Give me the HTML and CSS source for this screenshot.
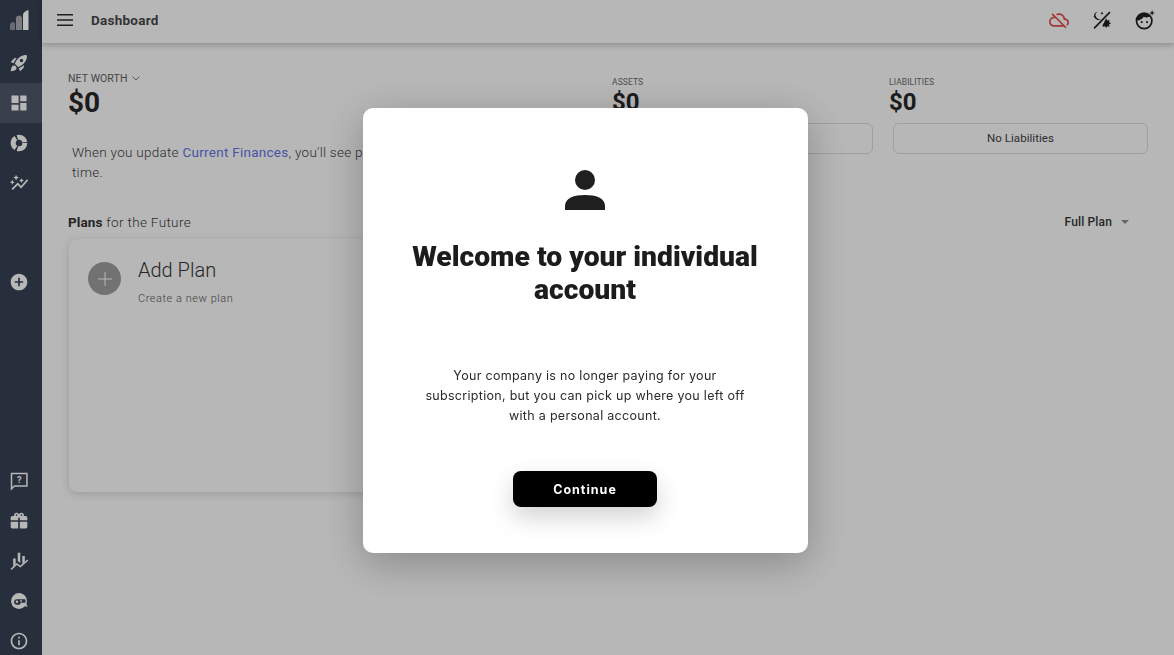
FILE: index.html
```html
<!DOCTYPE html>
<html lang="en">
<head>
<meta charset="utf-8">
<title>Dashboard</title>
<link rel="stylesheet" href="styles.css">
</head>
<body>
<div class="app">
  <nav class="sidebar">
    <div class="logo">
      <svg class="ico" viewBox="0 0 20 20" width="20" height="20"><path d="M1 14.500a3 3 0 0 1 5-1.500V20H1z" fill="#8d9199"/><path d="M7 9.500a3 3 0 0 1 6-1.500V20H7z" fill="#a3a6ad"/><path d="M14 5c0-2.500 2.500-4 5.500-5V20H14z" fill="#fff"/></svg>
    </div>
    <a class="nav-item"><svg class="ico" viewBox="0 0 24 24"><path d="M9.190 6.350c-2.040 2.290-3.440 5.580-3.570 5.890L2 10.690l4.050-4.050c.47-.47 1.150-.68 1.810-.55l1.330.26zM11.170 17s3.740-1.550 5.890-3.700c5.400-5.400 4.500-9.620 4.210-10.570-.95-.3-5.170-1.190-10.570 4.210C8.550 9.090 7 12.830 7 12.830L11.170 17zm6.480-2.190c-2.290 2.040-5.580 3.440-5.890 3.570L13.310 22l4.050-4.050c.47-.47.68-1.150.55-1.810l-.26-1.330zM9 18c0 .83-.34 1.580-.88 2.120C6.940 21.300 2 22 2 22s.7-4.940 1.880-6.120C4.420 15.340 5.170 15 6 15c1.660 0 3 1.340 3 3zm4-9c0-1.100.9-2 2-2s2 .9 2 2-.9 2-2 2-2-.9-2-2z"/></svg></a>
    <a class="nav-item active"><svg class="ico" viewBox="0 0 24 24"><path d="M3 3h8.500v9H3zM13.500 3H21v7h-7.500zM3 14h8.500v7H3zM13.500 12H21v9h-7.500z"/></svg></a>
    <a class="nav-item"><svg class="ico" viewBox="0 0 24 24"><circle class="donut" cx="12" cy="12" r="7" pathLength="24" stroke-dasharray="7 1 7.500 1 6.500 1"/></svg></a>
    <a class="nav-item"><svg class="ico" viewBox="0 0 24 24"><path d="M14.060 9.940 12 9l2.060-.94L15 6l.94 2.060L18 9l-2.060.94L15 12l-.94-2.060zM4 14l.94-2.060L7 11l-2.060-.94L4 8l-.94 2.060L1 11l2.060.94L4 14zm4.500-5 1.090-2.410L12 5.500 9.590 4.410 8.500 2 7.410 4.410 5 5.500l2.410 1.090L8.500 9zm-4 11.500 6-6.010 4 4L23 8.930l-1.410-1.410-7.090 7.970-4-4L3 19l1.500 1.500z"/></svg></a>
    <a class="nav-item add"><svg class="ico" viewBox="0 0 24 24"><path d="M12 2C6.480 2 2 6.480 2 12s4.480 10 10 10 10-4.480 10-10S17.520 2 12 2zm5 11h-4v4h-2v-4H7v-2h4V7h2v4h4v2z"/></svg></a>
    <a class="nav-item bottom-first"><svg class="ico" viewBox="0 0 24 24"><path class="line" d="M3 3h18.500v15H6.500L3 21.500z"/><text class="qmark" x="12.300" y="14.500" text-anchor="middle">?</text></svg></a>
    <a class="nav-item"><svg class="ico" viewBox="0 0 24 24"><path d="M20 6h-2.200c.1-.3.2-.6.2-1 0-1.700-1.300-3-3-3-1 0-2 .5-2.500 1.400L12 4l-.5-.6C11 2.500 10 2 9 2 7.300 2 6 3.300 6 5c0 .4.100.7.200 1H4c-1.100 0-2 .9-2 2v3h9V8h2v3h9V8c0-1.100-.9-2-2-2zM9 6c-.6 0-1-.4-1-1s.4-1 1-1 1 .4 1 1-.4 1-1 1zm6 0c-.6 0-1-.4-1-1s.4-1 1-1 1 .4 1 1-.4 1-1 1zM2 13v6c0 1.100.9 2 2 2h7v-8zm11 0v8h7c1.100 0 2-.9 2-2v-6z"/></svg></a>
    <a class="nav-item"><svg class="ico" viewBox="0 0 24 24"><path d="M5 9h3v6.500l-3 3zM10.500 2h3v12.500l-3-2.500zM16 6h3v6.500l-3 3z"/><path class="line" d="M2.500 22l7-6.500 4 3.200L22.500 11"/></svg></a>
    <a class="nav-item"><svg class="ico" viewBox="0 0 24 24"><path d="M12 2.500a9.500 9.500 0 0 0-9.500 9.500 9.500 9.500 0 0 0 16.500 6.400L22.500 19l-1.700-3.500A9.500 9.500 0 0 0 12 2.500z"/><path class="cut" d="M6 13.500c0-2 1.500-3.500 3.500-3.500h9.500c1.300 0 1.300 4 0 4h-5l-1 2.500H9.500C7.500 16.500 6 15.500 6 13.500z"/><circle cx="9.500" cy="13" r="1.500"/><circle cx="14.500" cy="12" r="1.100"/></svg></a>
    <a class="nav-item"><svg class="ico" viewBox="0 0 24 24"><path d="M11 7h2v2h-2zm0 4h2v6h-2zm1-9C6.480 2 2 6.480 2 12s4.480 10 10 10 10-4.480 10-10S17.520 2 12 2zm0 18c-4.410 0-8-3.590-8-8s3.590-8 8-8 8 3.590 8 8-3.590 8-8 8z"/></svg></a>
  </nav>

  <div class="main">
    <header class="topbar">
      <svg class="menu" viewBox="0 0 16 12" width="16" height="12"><path d="M0 0h16v1.600H0zM0 5.200h16v1.600H0zM0 10.400h16V12H0z"/></svg>
      <h1 class="page-title">Dashboard</h1>
      <div class="top-actions">
        <svg class="top-ico cloud" viewBox="0 0 24 24"><path d="M24 15c0-2.640-2.050-4.780-4.650-4.960C18.670 6.590 15.640 4 12 4c-1.330 0-2.570.36-3.650.97l1.490 1.490C10.510 6.170 11.230 6 12 6c3.040 0 5.500 2.460 5.500 5.500v.5H19c1.660 0 3 1.340 3 3 0 .99-.48 1.850-1.210 2.400l1.410 1.410c1.090-.92 1.800-2.270 1.800-3.810zM4.410 3.860L3 5.270l2.770 2.770h-.42C2.340 8.360 0 10.910 0 14c0 3.310 2.690 6 6 6h11.730l2 2 1.410-1.410L4.410 3.860zM6 18c-2.210 0-4-1.790-4-4s1.790-4 4-4h1.730l8 8H6z"/></svg>
        <svg class="top-ico" viewBox="0 0 24 24"><path d="M7 2a5 5 0 1 0 4 8.500A4.500 4.500 0 0 1 7 2z"/><path d="M12 2l.6 1.400 1.400.6-1.400.6-.6 1.400-.6-1.400L10 4l1.400-.6z"/><path d="M3 6.500l.4 1 1 .4-1 .4-.4 1-.4-1-1-.4 1-.4z"/><path class="slash" d="M21.500 2.500 2.500 22"/><path d="M17 10l1.200 2.500 2.800-.5-.5 2.800 2.500 1.200-2.500 1.200.5 2.800-2.800-.5L17 22l-1.200-2.500-2.800.5-.5-1.500z"/></svg>
        <svg class="top-ico" viewBox="0 0 24 24"><circle class="ring" cx="11" cy="13" r="9.300"/><path d="M2 13C2 7 6 3.500 11 3.500c3 0 6 1.500 7.500 4-2.500 1.700-5.500 1.700-8 .7C9.500 10 6 12.500 2 13z"/><circle cx="8" cy="14.500" r="1.300"/><circle cx="14.500" cy="14.500" r="1.300"/><path d="M20.500 0l.9 2.600L24 3.500l-2.600.9-.9 2.600-.9-2.600L17 3.500l2.600-.9z"/></svg>
      </div>
    </header>

    <main class="content">
      <section class="summary">
        <div class="net">
          <div class="net-label">NET WORTH <svg class="chev" viewBox="0 0 8 5" width="8" height="5"><path d="M.7.7 4 4 7.300.7"/></svg></div>
          <div class="net-value">$0</div>
          <p class="note">When you update <a class="link">Current Finances</a>, you'll see progress on your net worth over<br>time.</p>
        </div>
        <div class="stat">
          <div class="stat-label">ASSETS</div>
          <div class="stat-value">$0</div>
          <div class="stat-box">No Assets</div>
        </div>
        <div class="stat">
          <div class="stat-label">LIABILITIES</div>
          <div class="stat-value">$0</div>
          <div class="stat-box">No Liabilities</div>
        </div>
      </section>

      <section class="plans">
        <div class="plans-head">
          <div class="plans-title"><strong>Plans</strong> for the Future</div>
          <div class="plan-select">Full Plan <span class="caret"></span></div>
        </div>
        <div class="plan-card">
          <div class="plan-add"><svg viewBox="0 0 14 14" width="14" height="14"><path d="M6.500 0h1v6.500H14v1H7.500V14h-1V7.500H0v-1h6.500z"/></svg></div>
          <div>
            <div class="plan-name">Add Plan</div>
            <div class="plan-sub">Create a new plan</div>
          </div>
        </div>
      </section>
    </main>
  </div>
</div>

<div class="overlay">
  <div class="dialog" role="dialog">
    <svg class="person" viewBox="0 0 40 40" width="40" height="40"><circle cx="20" cy="10" r="10"/><path d="M0 40v-4c0-8 9-11 20-11s20 3 20 11v4z"/></svg>
    <h2 class="dialog-title">Welcome to your individual account</h2>
    <p class="dialog-text">Your company is no longer paying for your subscription, but you can pick up where you left off with a personal account.</p>
    <button class="continue">Continue</button>
  </div>
</div>
</body>
</html>
```
FILE: styles.css
```css
* { box-sizing: border-box; }
html, body { margin: 0; height: 100%; overflow: hidden; }
body { font-family: Roboto, "Liberation Sans", sans-serif; background: #f4f4f4; color: #1f1f1f; }

.app { display: flex; height: 655px; }

.sidebar { width: 42px; flex: none; height: 655px; overflow: hidden; background: #353f51; display: flex; flex-direction: column; }
.logo { height: 43px; flex: none; display: flex; align-items: center; justify-content: center; padding: 0 4px 3px 0; }
.nav-item { height: 40px; flex: none; display: flex; align-items: center; justify-content: center; padding-right: 4px; }
.nav-item.active { background: #4d5666; }
.nav-item.add { margin-top: 59px; }
.bottom-first { margin-top: 159px; }
.ico { width: 20px; height: 20px; fill: #f4f4f4; }
.ico .line { fill: none; stroke: #f4f4f4; stroke-width: 1.800; }
.ico .cut { fill: #353f51; }
.ico .donut { fill: none; stroke: #f4f4f4; stroke-width: 6; }
.qmark { font: 700 11px Roboto, sans-serif; fill: #f4f4f4; }

.main { flex: 1; min-width: 0; display: flex; flex-direction: column; }
.topbar { height: 43px; flex: none; display: flex; align-items: center; padding: 0 19px 3px 15px; background: #f5f5f5; box-shadow: 0 2px 6px rgba(0,0,0,.24); position: relative; }
.menu { fill: #2a2a2a; flex: none; }
.page-title { margin: 0 0 0 18px; font-size: 13.500px; font-weight: 700; letter-spacing: .25px; color: #444; }
.top-actions { margin-left: auto; display: flex; gap: 23px; align-items: center; }
.top-ico { width: 20px; height: 20px; fill: #1f1f1f; }
.top-ico.cloud { fill: #d84a45; }
.top-ico .slash { stroke: #1f1f1f; stroke-width: 2; fill: none; }
.top-ico .ring { fill: none; stroke: #1f1f1f; stroke-width: 2; }

.content { padding: 29px 26px 0 26px; }
.summary { display: grid; grid-template-columns: 1fr 261px 259px; column-gap: 16px; }
.net-label { font-size: 10.500px; line-height: 13px; letter-spacing: .1px; color: #5c5c5c; display: flex; align-items: center; gap: 5px; }
.chev { fill: none; stroke: #777; stroke-width: 1; }
.net-value { font-size: 28px; font-weight: 700; line-height: 34px; margin-top: 1px; color: #262626; }
.note { margin: 22px 0 0 4px; font-size: 13.500px; font-weight: 300; line-height: 20px; letter-spacing: .27px; color: #3c3c3c; }
.link { color: #6370de; font-weight: 400; }

.stat-label { font-size: 8.500px; line-height: 10px; margin-top: 5px; letter-spacing: .1px; color: #666; }
.stat-value { font-size: 24px; font-weight: 700; line-height: 28px; margin-top: 1px; color: #262626; }
.stat-box { margin: 7px 0 0 4px; height: 31px; border: 1px solid #d4d4d4; border-radius: 6px; display: flex; align-items: center; justify-content: center; font-size: 11.500px; letter-spacing: .05px; color: #3c3c3c; padding-bottom: 1px; }

.plans-head { display: flex; justify-content: space-between; align-items: center; margin-top: 30px; height: 20px; }
.plans-title { font-size: 13.500px; font-weight: 300; letter-spacing: .35px; color: #3c3c3c; }
.plans-title strong { font-weight: 700; letter-spacing: .1px; color: #333; }
.plan-select { font-size: 12px; font-weight: 500; letter-spacing: .15px; color: #333; display: flex; align-items: center; gap: 9px; margin-right: 19px; }
.caret { width: 0; height: 0; border: 4px solid transparent; border-top: 4px solid #888; border-bottom: 0; }
.plan-card { margin: 7px 0 0 1px; width: 360px; height: 253px; border-radius: 8px; background: #f4f4f4; box-shadow: 0 2px 8px rgba(0,0,0,.14); padding: 23px 19px; display: flex; gap: 17px; }
.plan-add { width: 33px; height: 33px; flex: none; border-radius: 50%; background: #999; display: flex; align-items: center; justify-content: center; fill: #f4f4f4; }
.plan-name { font-size: 20px; font-weight: 300; line-height: 24px; color: #333; margin-top: -4px; }
.plan-sub { font-size: 11px; font-weight: 300; line-height: 14px; letter-spacing: .55px; color: #555; margin-top: 10px; }

.overlay { position: fixed; inset: 0; background: rgba(0,0,0,.25); display: flex; justify-content: center; padding: 108px 4px 0 0; align-items: flex-start; }
.dialog { width: 445px; height: 445px; background: #fff; border-radius: 10px; box-shadow: 0 10px 40px rgba(0,0,0,.25); display: flex; flex-direction: column; align-items: center; padding-top: 62px; }
.person { fill: #1f1f1f; flex: none; }
.dialog-title { margin: 30px 0 0; width: 360px; text-align: center; font-size: 28.300px; font-weight: 900; line-height: 33px; color: #1c1c1c; }
.dialog-text { margin: 60px 0 0; width: 330px; text-align: center; font-family: Inter, Roboto, sans-serif; font-size: 12.500px; line-height: 20px; letter-spacing: .3px; color: #2a2a2a; }
.continue { margin-top: 45px; width: 144px; height: 36px; border: 0; border-radius: 8px; background: #000; color: #fff; font-family: Inter, Roboto, sans-serif; font-size: 12.500px; font-weight: 700; letter-spacing: 1px; box-shadow: 0 10px 24px rgba(0,0,0,.18); }
```
